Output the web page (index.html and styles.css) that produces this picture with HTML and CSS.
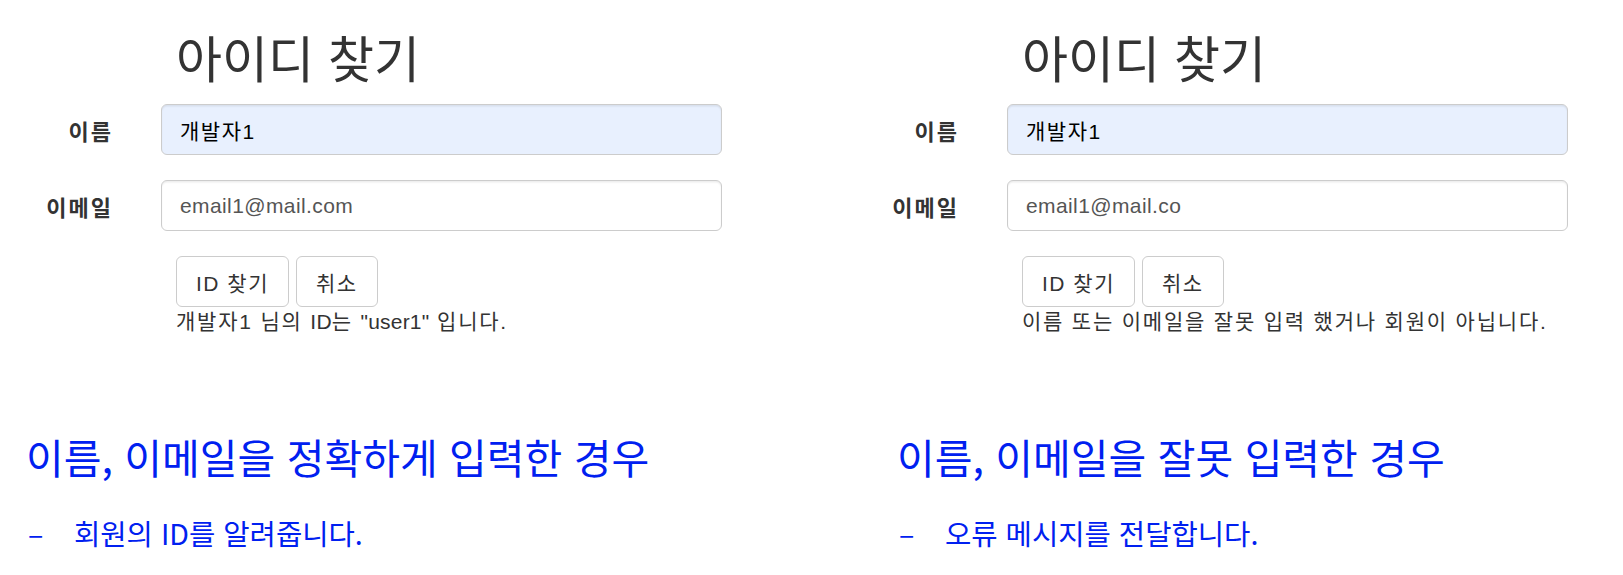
FILE: index.html
```html
<!DOCTYPE html>
<html lang="ko">
<head>
<meta charset="utf-8">
<title>아이디 찾기</title>
<link rel="stylesheet" href="styles.css">
</head>
<body>
<div class="page">
  <div class="panels">
    <section class="panel">
      <h1 class="title">아이디 찾기</h1>
      <form class="form">
        <div class="row">
          <label class="label">이름</label>
          <input class="input autofill" type="text" value="개발자1">
        </div>
        <div class="row">
          <label class="label">이메일</label>
          <input class="input" type="text" value="email1@mail.com">
        </div>
        <div class="actions">
          <div class="btns">
            <button class="btn" type="button">ID 찾기</button>
            <button class="btn" type="button">취소</button>
          </div>
          <p class="msg">개발자1 님의 <span class="latin">ID</span>는 <span class="latin">"user1"</span> 입니다.</p>
        </div>
      </form>
    </section>
    <section class="panel">
      <h1 class="title">아이디 찾기</h1>
      <form class="form">
        <div class="row">
          <label class="label">이름</label>
          <input class="input autofill" type="text" value="개발자1">
        </div>
        <div class="row">
          <label class="label">이메일</label>
          <input class="input" type="text" value="email1@mail.co">
        </div>
        <div class="actions">
          <div class="btns">
            <button class="btn" type="button">ID 찾기</button>
            <button class="btn" type="button">취소</button>
          </div>
          <p class="msg">이름 또는 이메일을 잘못 입력 했거나 회원이 아닙니다.</p>
        </div>
      </form>
    </section>
  </div>
  <div class="notes">
    <div class="note">
      <h2 class="note-title">이름, 이메일을 정확하게 입력한 경우</h2>
      <div class="bullet"><span class="dash">–</span><span>회원의 ID를 알려줍니다.</span></div>
    </div>
    <div class="note">
      <h2 class="note-title">이름, 이메일을 잘못 입력한 경우</h2>
      <div class="bullet"><span class="dash">–</span><span>오류 메시지를 전달합니다.</span></div>
    </div>
  </div>
</div>
</body>
</html>
```

FILE: styles.css
```css
* { box-sizing: border-box; }

html, body {
  margin: 0;
  padding: 0;
  background: #ffffff;
}

body {
  font-family: "Liberation Sans", "Noto Sans CJK KR", sans-serif;
  color: #333333;
  font-size: 21px;
}

.page {
  width: 1623px;
  height: 575px;
  overflow: hidden;
}

.panels {
  display: grid;
  grid-template-columns: 846px 777px;
}

.panel {
  padding-top: 28px;
}

.title {
  margin: 0 0 20px 176px;
  font-family: "Noto Sans CJK KR", sans-serif;
  font-weight: 400;
  font-size: 50px;
  line-height: 56px;
  color: #333333;
}

.form {
  display: flex;
  flex-direction: column;
  gap: 25px;
}

.row {
  display: grid;
  grid-template-columns: 111px 561px;
  column-gap: 50px;
  align-items: center;
}

.label {
  text-align: right;
  font-weight: 700;
  font-size: 22px;
  letter-spacing: 2px;
  margin-right: -2px;
  color: #333333;
}

.input {
  height: 51px;
  width: 561px;
  padding: 0 18px;
  border: 1.5px solid #cccccc;
  border-radius: 6px;
  font-family: "Liberation Sans", "Noto Sans CJK KR", sans-serif;
  font-size: 21px;
  letter-spacing: 0.4px;
  color: #555555;
  background: #ffffff;
  box-shadow: inset 0 1.5px 1.5px rgba(0, 0, 0, 0.075);
  outline: none;
}

.input.autofill {
  background: #e8f0fe;
  color: #000000;
  letter-spacing: 1.5px;
}

.actions {
  margin-left: 176px;
  display: flex;
  flex-direction: column;
}

.btns {
  display: flex;
  gap: 7px;
}

.btn {
  height: 51px;
  padding: 0 19px;
  background: #ffffff;
  border: 1.5px solid #cccccc;
  border-radius: 6px;
  font-family: "Liberation Sans", "Noto Sans CJK KR", sans-serif;
  font-size: 21px;
  letter-spacing: 1.5px;
  color: #333333;
}

.msg {
  margin: 0;
  font-size: 21px;
  line-height: 30px;
  letter-spacing: 1.8px;
  color: #333333;
}

.msg .latin {
  letter-spacing: 0.2px;
}

.notes {
  display: grid;
  grid-template-columns: 871px 1fr;
  padding-left: 26px;
  margin-top: 93px;
}

.note-title {
  margin: 0;
  font-family: "Noto Sans CJK KR", sans-serif;
  font-weight: 400;
  font-size: 41px;
  line-height: 52px;
  color: #0020f0;
}

.bullet {
  display: flex;
  margin-top: 32px;
  font-family: "Noto Sans CJK KR", sans-serif;
  font-size: 28.6px;
  line-height: 38px;
  color: #0020f0;
}

.dash {
  width: 48px;
  padding-left: 2px;
}
```
